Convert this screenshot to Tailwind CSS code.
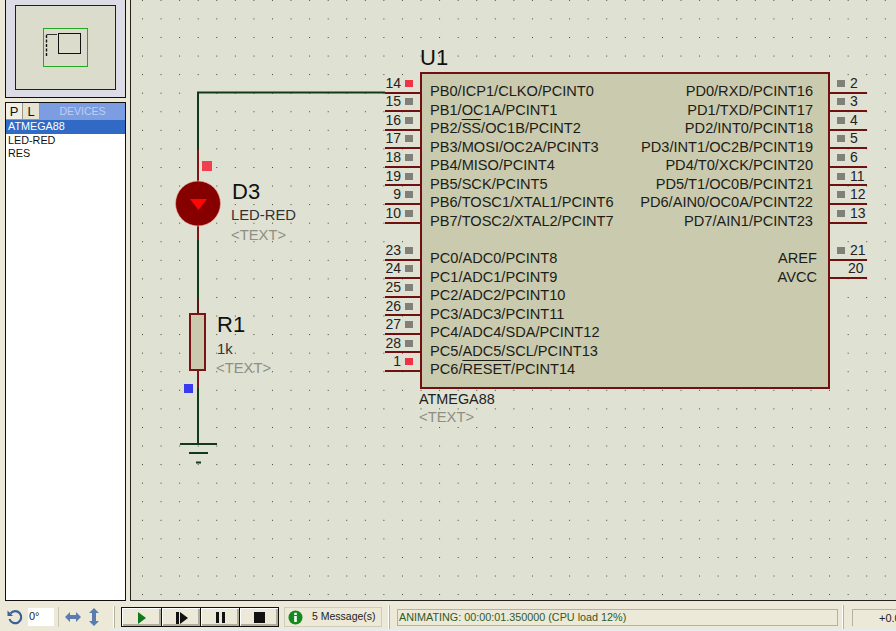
<!DOCTYPE html>
<html lang="en">
<head>
  <meta charset="UTF-8" />
  <title>ISIS schematic</title>
  <script src="https://cdn.jsdelivr.net/npm/@tailwindcss/browser@4"></script>
</head>
<body class="w-[896px] h-[631px] overflow-hidden bg-[#ece9d8] font-['Liberation_Sans',Arial,sans-serif] text-[#111]">
  <div class="flex flex-col h-full">

    <div class="flex h-[601px]">
      <!-- left panel -->
      <div class="w-[130px] shrink-0 flex flex-col pl-[5px] pr-[4px] bg-[#ece9d8]">
        <div class="h-[98px] bg-[#dcdce6] border-r border-b border-l border-[#111] flex flex-col">
          <svg width="119" height="97" viewBox="6 0 119 97">
            <rect x="15.5" y="5.5" width="100" height="84" fill="#dcdccd" stroke="#10108c" />
            <rect x="43.5" y="28.5" width="44" height="38" fill="#dcdccc" stroke="#22aa22" />
            <rect x="58.5" y="33.5" width="22" height="20" fill="#dcdccc" stroke="#111" />
            <path d="M46.5 34.5H57" stroke="#333" fill="none" />
            <path d="M46.5 35V57" stroke="#111" stroke-dasharray="3 1.5" stroke-width="1.4" fill="none" />
          </svg>
        </div>
        <div class="mt-[4px] flex-1 flex flex-col border border-[#111] bg-white">
          <div class="h-[17px] flex bg-[#7c9de2]">
            <span class="w-[17px] h-[17px] bg-[#f1efe3] border-r border-b border-[#9a9888] text-[13px] leading-[17px] text-center">P</span>
            <span class="w-[17px] h-[17px] bg-[#e6e3d2] border-r border-b border-[#9a9888] text-[13px] leading-[17px] text-center">L</span>
            <span class="flex-1 text-[10.5px] leading-[17px] text-center text-[#bcd0f2]">DEVICES</span>
          </div>
          <div class="bg-[#316ac5] text-white text-[10.8px] leading-[13.5px] pl-[2px]">ATMEGA88</div>
          <div class="text-[10.8px] leading-[13.5px] pl-[2px]">LED-RED</div>
          <div class="text-[10.8px] leading-[13.5px] pl-[2px]">RES</div>
        </div>
      </div>

      <!-- schematic canvas -->
      <div class="relative flex-1 bg-[#dfe1d3] border-l border-b border-[#222]">
        <svg class="absolute left-0 top-0" width="765" height="600" viewBox="131 0 765 600">
          <defs>
            <pattern id="dots" x="12" y="-0.15" width="18.57" height="18.57" patternUnits="userSpaceOnUse">
              <rect x="0" y="0" width="1" height="1" fill="#3c3f30" shape-rendering="crispEdges" />
            </pattern>
          </defs>
          <rect x="131" y="0" width="765" height="600" fill="url(#dots)" />
          <g fill="none" stroke-width="2">
            <path d="M385 92.5H198V150" stroke="#123a18" />
            <path d="M198 150V182" stroke="#7f1616" />
            <path d="M198 225V240" stroke="#7f1616" />
            <path d="M198 240V300" stroke="#123a18" />
            <path d="M198 300V314" stroke="#5a1414" />
            <path d="M198 370V388" stroke="#7f1616" />
            <path d="M198 388V444" stroke="#123a18" />
            <path d="M180 444H217M189 453H208" stroke="#123a18" />
            <path d="M196 462.5H201" stroke="#123a18" />
          </g>
          <circle cx="198" cy="203.500" r="22.500" fill="#870000" stroke="#f0b8a8" stroke-width="0.6" />
          <path d="M190 199H207L198.500 210Z" fill="#ff0606" />
          <rect x="190" y="314" width="15" height="56" fill="#c9caae" stroke="#7a1414" stroke-width="2" />
          <rect x="202" y="161" width="10" height="10" fill="#f23f50" />
          <rect x="184" y="384" width="9" height="9" fill="#3a3aee" />
        </svg>

        <!-- part labels -->
        <div class="absolute left-[101px] top-[179px] text-[22px] leading-[26px]">D3</div>
        <div class="absolute left-[100px] top-[206px] text-[14.8px] leading-[18px] text-[#333]">LED-RED</div>
        <div class="absolute left-[100px] top-[226px] text-[14.8px] leading-[18px] text-[#8e8e82]">&lt;TEXT&gt;</div>
        <div class="absolute left-[86px] top-[312px] text-[22px] leading-[26px]">R1</div>
        <div class="absolute left-[86px] top-[340px] text-[14.8px] leading-[18px] text-[#333]">1k</div>
        <div class="absolute left-[85px] top-[359px] text-[14.8px] leading-[18px] text-[#8e8e82]">&lt;TEXT&gt;</div>
        <div class="absolute left-[289px] top-[45px] text-[22px] leading-[26px]">U1</div>
        <div class="absolute left-[288px] top-[390px] text-[14.4px] leading-[18px] text-[#222]">ATMEGA88</div>
        <div class="absolute left-[288px] top-[408px] text-[14.8px] leading-[18px] text-[#8e8e82]">&lt;TEXT&gt;</div>

        <!-- left pins -->
        <div class="absolute left-[254px] top-[75px] w-[36px] flex flex-col text-[14px] text-[#222]">
          <div class="h-[18.57px] flex items-center justify-end gap-[4px] pr-[8px] border-b-2 border-[#701010]"><span>14</span><i class="w-[8px] h-[7px] bg-[#ee3344]"></i></div>
          <div class="h-[18.57px] flex items-center justify-end gap-[4px] pr-[8px] border-b-2 border-[#701010]"><span>15</span><i class="w-[8px] h-[7px] bg-[#808078]"></i></div>
          <div class="h-[18.57px] flex items-center justify-end gap-[4px] pr-[8px] border-b-2 border-[#701010]"><span>16</span><i class="w-[8px] h-[7px] bg-[#808078]"></i></div>
          <div class="h-[18.57px] flex items-center justify-end gap-[4px] pr-[8px] border-b-2 border-[#701010]"><span>17</span><i class="w-[8px] h-[7px] bg-[#808078]"></i></div>
          <div class="h-[18.57px] flex items-center justify-end gap-[4px] pr-[8px] border-b-2 border-[#701010]"><span>18</span><i class="w-[8px] h-[7px] bg-[#808078]"></i></div>
          <div class="h-[18.57px] flex items-center justify-end gap-[4px] pr-[8px] border-b-2 border-[#701010]"><span>19</span><i class="w-[8px] h-[7px] bg-[#808078]"></i></div>
          <div class="h-[18.57px] flex items-center justify-end gap-[4px] pr-[8px] border-b-2 border-[#701010]"><span>9</span><i class="w-[8px] h-[7px] bg-[#808078]"></i></div>
          <div class="h-[18.57px] flex items-center justify-end gap-[4px] pr-[8px] border-b-2 border-[#701010]"><span>10</span><i class="w-[8px] h-[7px] bg-[#808078]"></i></div>
          <div class="h-[18.57px]"></div>
          <div class="h-[18.57px] flex items-center justify-end gap-[4px] pr-[8px] border-b-2 border-[#701010]"><span>23</span><i class="w-[8px] h-[7px] bg-[#808078]"></i></div>
          <div class="h-[18.57px] flex items-center justify-end gap-[4px] pr-[8px] border-b-2 border-[#701010]"><span>24</span><i class="w-[8px] h-[7px] bg-[#808078]"></i></div>
          <div class="h-[18.57px] flex items-center justify-end gap-[4px] pr-[8px] border-b-2 border-[#701010]"><span>25</span><i class="w-[8px] h-[7px] bg-[#808078]"></i></div>
          <div class="h-[18.57px] flex items-center justify-end gap-[4px] pr-[8px] border-b-2 border-[#701010]"><span>26</span><i class="w-[8px] h-[7px] bg-[#808078]"></i></div>
          <div class="h-[18.57px] flex items-center justify-end gap-[4px] pr-[8px] border-b-2 border-[#701010]"><span>27</span><i class="w-[8px] h-[7px] bg-[#808078]"></i></div>
          <div class="h-[18.57px] flex items-center justify-end gap-[4px] pr-[8px] border-b-2 border-[#701010]"><span>28</span><i class="w-[8px] h-[7px] bg-[#808078]"></i></div>
          <div class="h-[18.57px] flex items-center justify-end gap-[4px] pr-[8px] border-b-2 border-[#701010]"><span>1</span><i class="w-[8px] h-[7px] bg-[#ee3344]"></i></div>
        </div>

        <!-- chip body -->
        <div class="absolute left-[289px] top-[72px] w-[410px] h-[317px] bg-[#c9caae] border-2 border-[#701010] flex justify-between pl-[8px] pr-[15px] pt-[8px] text-[14.6px] leading-[18.57px] text-[#1c1c18]">
          <div class="flex flex-col">
            <div>PB0/ICP1/CLKO/PCINT0</div>
            <div>PB1/OC1A/PCINT1</div>
            <div>PB2/<span class="overline">SS</span>/OC1B/PCINT2</div>
            <div>PB3/MOSI/OC2A/PCINT3</div>
            <div>PB4/MISO/PCINT4</div>
            <div>PB5/SCK/PCINT5</div>
            <div>PB6/TOSC1/XTAL1/PCINT6</div>
            <div>PB7/TOSC2/XTAL2/PCINT7</div>
            <div class="h-[18.57px]"></div>
            <div>PC0/ADC0/PCINT8</div>
            <div>PC1/ADC1/PCINT9</div>
            <div>PC2/ADC2/PCINT10</div>
            <div>PC3/ADC3/PCINT11</div>
            <div>PC4/ADC4/SDA/PCINT12</div>
            <div>PC5/ADC5/SCL/PCINT13</div>
            <div>PC6/<span class="overline">RESET</span>/PCINT14</div>
          </div>
          <div class="flex flex-col items-end">
            <div>PD0/RXD/PCINT16</div>
            <div>PD1/TXD/PCINT17</div>
            <div>PD2/INT0/PCINT18</div>
            <div>PD3/INT1/OC2B/PCINT19</div>
            <div>PD4/T0/XCK/PCINT20</div>
            <div>PD5/T1/OC0B/PCINT21</div>
            <div>PD6/AIN0/OC0A/PCINT22</div>
            <div>PD7/AIN1/PCINT23</div>
            <div class="h-[18.57px]"></div>
            <div class="-mr-[4px]">AREF</div>
            <div class="-mr-[4px]">AVCC</div>
          </div>
        </div>

        <!-- right pins -->
        <div class="absolute left-[699px] top-[75px] w-[37px] flex flex-col text-[14px] text-[#222]">
          <div class="h-[18.57px] flex items-center gap-[5px] pl-[7px] border-b-2 border-[#701010]"><i class="w-[8px] h-[7px] bg-[#808078]"></i><span>2</span></div>
          <div class="h-[18.57px] flex items-center gap-[5px] pl-[7px] border-b-2 border-[#701010]"><i class="w-[8px] h-[7px] bg-[#808078]"></i><span>3</span></div>
          <div class="h-[18.57px] flex items-center gap-[5px] pl-[7px] border-b-2 border-[#701010]"><i class="w-[8px] h-[7px] bg-[#808078]"></i><span>4</span></div>
          <div class="h-[18.57px] flex items-center gap-[5px] pl-[7px] border-b-2 border-[#701010]"><i class="w-[8px] h-[7px] bg-[#808078]"></i><span>5</span></div>
          <div class="h-[18.57px] flex items-center gap-[5px] pl-[7px] border-b-2 border-[#701010]"><i class="w-[8px] h-[7px] bg-[#808078]"></i><span>6</span></div>
          <div class="h-[18.57px] flex items-center gap-[5px] pl-[7px] border-b-2 border-[#701010]"><i class="w-[8px] h-[7px] bg-[#808078]"></i><span>11</span></div>
          <div class="h-[18.57px] flex items-center gap-[5px] pl-[7px] border-b-2 border-[#701010]"><i class="w-[8px] h-[7px] bg-[#808078]"></i><span>12</span></div>
          <div class="h-[18.57px] flex items-center gap-[5px] pl-[7px] border-b-2 border-[#701010]"><i class="w-[8px] h-[7px] bg-[#808078]"></i><span>13</span></div>
          <div class="h-[18.57px]"></div>
          <div class="h-[18.57px] flex items-center gap-[5px] pl-[7px] border-b-2 border-[#701010]"><i class="w-[8px] h-[7px] bg-[#808078]"></i><span>21</span></div>
          <div class="h-[18.57px] flex items-center pl-[18px] border-b-2 border-[#701010]"><span>20</span></div>
        </div>
      </div>
    </div>

    <!-- bottom bar -->
    <div class="flex-1 flex items-center pt-[4px] bg-[#ece9d8] text-[#222]">
      <svg class="ml-[6px] w-[18px] h-[18px]" viewBox="0 0 18 18">
        <path d="M4.500 5.500A6 6 0 1 1 3.500 11" fill="none" stroke="#3f5f98" stroke-width="2.200" />
        <path d="M1.500 2.500V8H7Z" fill="#3f5f98" />
      </svg>
      <div class="ml-[4px] w-[26px] h-[18px] bg-white text-[11px] leading-[16px] pl-[1px]">0°</div>
      <div class="ml-[4px] w-px h-[20px] bg-[#c9c6b4]"></div>
      <svg class="ml-[5px] w-[18px] h-[14px]" viewBox="0 0 18 14">
        <path d="M1 7L6 2V5H12V2L17 7L12 12V9H6V12Z" fill="#5a7cae" />
      </svg>
      <svg class="ml-[5px] w-[14px] h-[20px]" viewBox="0 0 14 20">
        <path d="M7 1L12 6H9V14H12L7 19L2 14H5V6H2Z" fill="#5a7cae" />
      </svg>
      <div class="ml-[12px] w-[2px] h-[22px] border-l border-r border-l-[#fff] border-r-[#b5b29f]"></div>
      <div class="ml-[6px] flex h-[20px] bg-[#111] border border-[#111] gap-px">
        <div class="w-[39px] flex items-center justify-center bg-[#ece9d8] border-t border-l border-[#fff] shadow-[inset_-2px_-2px_0_#b0ad9b]">
          <svg width="10" height="12" viewBox="0 0 10 12"><path d="M1 0L9 6L1 12Z" fill="#0d7a1c" /></svg>
        </div>
        <div class="w-[38px] flex items-center justify-center bg-[#ece9d8] border-t border-l border-[#fff] shadow-[inset_-2px_-2px_0_#b0ad9b]">
          <svg width="12" height="12" viewBox="0 0 12 12"><path d="M0 0H3V12H0ZM4 0L12 6L4 12Z" fill="#111" /></svg>
        </div>
        <div class="w-[38px] flex items-center justify-center bg-[#ece9d8] border-t border-l border-[#fff] shadow-[inset_-2px_-2px_0_#b0ad9b]">
          <svg width="10" height="11" viewBox="0 0 10 11"><path d="M0 0H3V11H0ZM6 0H9V11H6Z" fill="#111" /></svg>
        </div>
        <div class="w-[38px] flex items-center justify-center bg-[#ece9d8] border-t border-l border-[#fff] shadow-[inset_-2px_-2px_0_#b0ad9b]">
          <svg width="11" height="11" viewBox="0 0 11 11"><rect width="11" height="11" fill="#111" /></svg>
        </div>
      </div>
      <div class="ml-[5px] w-[98px] h-[20px] flex items-center gap-[9px] pl-[3px] border border-[#cfccbb] bg-[#ece9d8]">
        <svg class="shrink-0" width="15" height="15" viewBox="0 0 15 15">
          <circle cx="7.500" cy="7.500" r="7" fill="#128a1e" />
          <rect x="6.200" y="6" width="2.600" height="6" fill="#fff" />
          <rect x="6.200" y="2.800" width="2.600" height="2.200" fill="#fff" />
        </svg>
        <span class="text-[10.5px] whitespace-nowrap">5 Message(s)</span>
      </div>
      <div class="ml-[6px] w-[2px] h-[24px] border-l border-r border-l-[#fff] border-r-[#b5b29f]"></div>
      <div class="ml-[7px] w-[441px] h-[17px] pl-[1px] border border-[#b5b29f] bg-[#ece9d8] text-[10.8px] leading-[15px] text-[#2f5a28] whitespace-nowrap">ANIMATING: 00:00:01.350000 (CPU load 12%)</div>
      <div class="ml-[4px] w-[2px] h-[24px] border-l border-r border-l-[#fff] border-r-[#b5b29f]"></div>
      <div class="ml-[8px] flex-1 h-[17px] border-l border-t border-[#b5b29f] text-[11px] leading-[16px] whitespace-nowrap overflow-hidden pl-[26px]">+0.0</div>
    </div>
    <div class="h-[2px] ml-[110px] bg-[#e3ecf2]"></div>
  </div>
</body>
</html>
